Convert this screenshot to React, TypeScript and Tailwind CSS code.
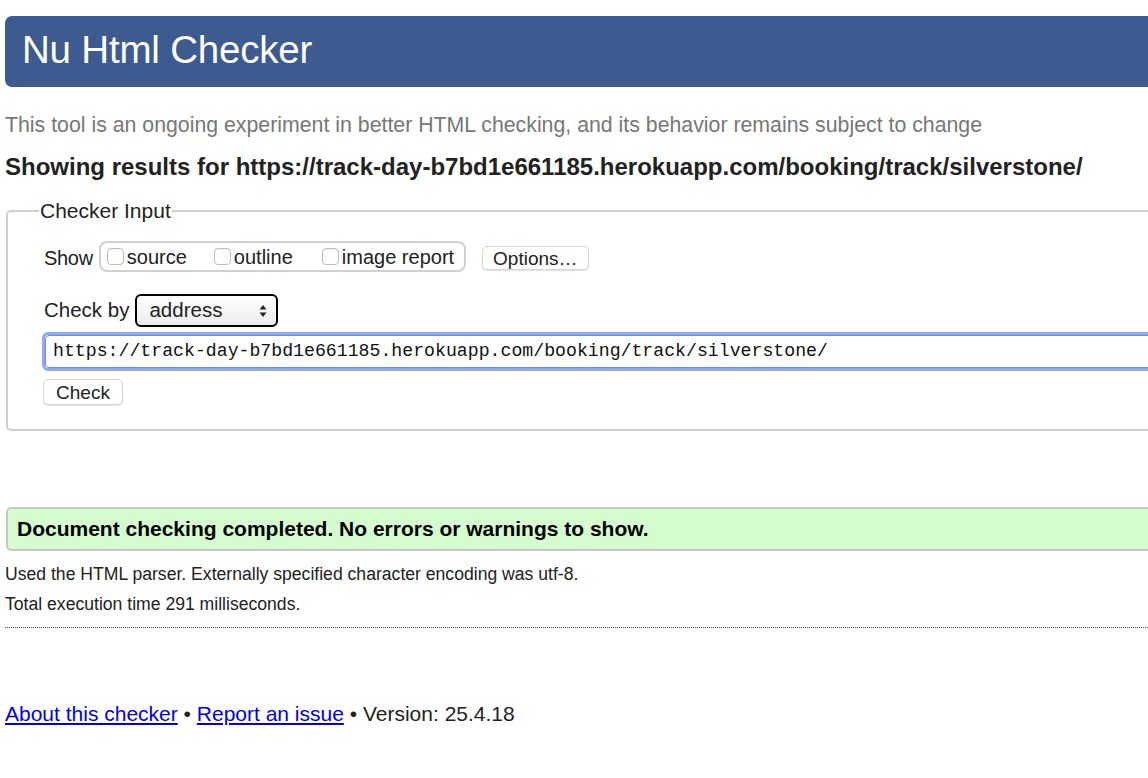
const URL_TEXT = 'https://track-day-b7bd1e661185.herokuapp.com/booking/track/silverstone/'

function Box({ label }: { label: string }) {
  return (
    <label className="flex items-center">
      <span className="shrink-0 w-[17px] h-[17px] rounded-[4px] border border-[#bdbdbd] bg-white shadow-[inset_0_1px_1px_rgba(0,0,0,0.05)]" />
      <span className="ml-[3px]">{label}</span>
    </label>
  )
}

// the little up/down triangles on the native select
function SelectArrows() {
  return (
    <svg width="8" height="14" viewBox="0 0 8 14" className="shrink-0">
      <path d="M4 1 L7.5 5.5 H0.5 Z" fill="#222" />
      <path d="M4 13 L7.5 8.5 H0.5 Z" fill="#222" />
    </svg>
  )
}

export default function App() {
  return (
    <div className="w-[1148px] h-[778px] overflow-hidden bg-white text-[#222] font-['Liberation_Sans',Arial,sans-serif]">
      <div className="w-[1300px] pl-[5px]">
        {/* header bar */}
        <div className="mt-[16px] h-[71px] bg-[#3d5b90] rounded-[7px] flex items-center pl-[17px] pb-[3px]">
          <h1 className="text-white text-[38.5px] leading-none tracking-[-0.2px]">Nu Html Checker</h1>
        </div>

        <p className="mt-[26px] text-[21.3px] leading-[24px] text-[#777]">
          This tool is an ongoing experiment in better HTML checking, and its behavior remains subject to change
        </p>
        <h2 className="mt-[16px] text-[24px] leading-[28px] font-bold text-[#222]">
          Showing results for {URL_TEXT}
        </h2>

        {/* checker input fieldset */}
        <fieldset className="mt-[18px] ml-[1px] border-2 border-[#cfcfcf] rounded-[5px] pl-[36px] pb-[23px] pt-[6px]">
          <legend className="ml-[-5px] px-[1px] text-[21px] leading-[24px] text-[#222]">Checker Input</legend>

          <div className="flex items-center text-[20px] leading-[24px] mt-[12px] h-[31px]">
            <span className="tracking-[-0.3px] mt-[2px]">Show</span>
            <div className="ml-[6px] h-[31px] w-[367px] border-2 border-[#d0d0d0] rounded-[8px] flex items-center pl-[6px]">
              <div className="w-[107px]"><Box label="source" /></div>
              <div className="w-[108px]"><Box label="outline" /></div>
              <Box label="image report" />
            </div>
            <button className="ml-[16px] mt-[3px] h-[24px] w-[107px] text-[19px] leading-none border border-[#d6d6d6] rounded-[5px] bg-white shadow-[0_1px_1px_rgba(0,0,0,0.12)]">
              Options…
            </button>
          </div>

          <div className="flex items-center text-[20.5px] mt-[22px]">
            <span>Check by</span>
            <div className="ml-[6px] h-[33px] w-[143px] border-2 border-black rounded-[6px] bg-gradient-to-b from-white to-[#ececec] flex items-center pl-[12px] pr-[9px] justify-between">
              <span>address</span>
              <SelectArrows />
            </div>
          </div>

          <div className="mt-[5px] ml-[-2px] h-[39px] border-[3px] border-[#8fabea] rounded-[6px] flex items-center">
            <div className="h-full w-full border border-[#6d8fd9] rounded-[4px] flex items-center pl-[7px] font-['Liberation_Mono','DejaVu_Sans_Mono',monospace] text-[18.2px] text-[#111]">
              {URL_TEXT}
            </div>
          </div>

          <button className="mt-[8px] ml-[-1px] h-[26px] w-[80px] text-[19px] leading-none border border-[#d6d6d6] rounded-[5px] bg-white shadow-[0_1px_1px_rgba(0,0,0,0.12)]">
            Check
          </button>
        </fieldset>

        {/* success message */}
        <div className="mt-[76px] ml-[1px] h-[44px] bg-[#d4fccf] border-2 border-[#c9c9c9] rounded-[5px] flex items-center pl-[9px]">
          <span className="font-bold text-[21px] text-black">Document checking completed. No errors or warnings to show.</span>
        </div>

        <p className="mt-[13px] text-[17.6px] leading-[20px] text-[#222]">
          Used the HTML parser. Externally specified character encoding was utf-8.
        </p>
        <p className="mt-[10px] text-[17.6px] leading-[20px] text-[#222]">Total execution time 291 milliseconds.</p>
        <div className="mt-[13px] border-t border-dotted border-[#555]" />

        <p className="mt-[74px] text-[21px] leading-[24px] text-[#222]">
          <a href="#" className="text-[#0000ee] underline">About this checker</a>
          {' • '}
          <a href="#" className="text-[#0000ee] underline">Report an issue</a>
          {' • Version: 25.4.18'}
        </p>
      </div>
    </div>
  )
}
